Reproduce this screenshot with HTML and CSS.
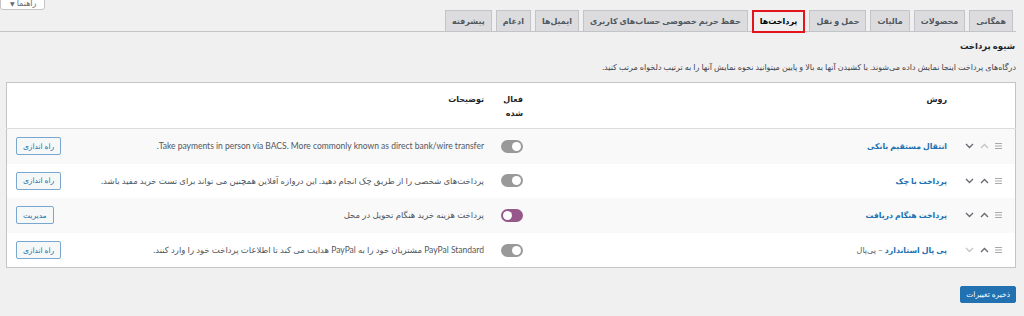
FILE: index.html
```html
<!DOCTYPE html>
<html lang="fa" dir="rtl">
<head>
  <meta charset="UTF-8">
  <meta name="viewport" content="width=device-width, initial-scale=1.0">
  <title>تنظیمات پرداخت</title>
  <link rel="stylesheet" href="styles.css">
</head>
<body>
  <div class="help-bar">
    <button class="help-btn">راهنما <span class="caret">▼</span></button>
  </div>
  <div class="wrap">
    <nav class="nav-tabs">
      <a class="nav-tab" href="#">همگانی</a>
      <a class="nav-tab" href="#">محصولات</a>
      <a class="nav-tab" href="#">مالیات</a>
      <a class="nav-tab" href="#">حمل و نقل</a>
      <a class="nav-tab active" href="#">پرداخت‌ها</a>
      <a class="nav-tab" href="#">حفظ حریم خصوصی حساب‌های کاربری</a>
      <a class="nav-tab" href="#">ایمیل‌ها</a>
      <a class="nav-tab" href="#">ادغام</a>
      <a class="nav-tab" href="#">پیشرفته</a>
    </nav>

    <div class="section">
      <h2>شیوه پرداخت</h2>
      <p class="intro">درگاه‌های پرداخت اینجا نمایش داده می‌شوند. با کشیدن آنها به بالا و پایین میتوانید نحوه نمایش آنها را به ترتیب دلخواه مرتب کنید.</p>

      <table class="gateways">
        <thead>
          <tr>
            <th class="col-sort"></th>
            <th class="col-name">روش</th>
            <th class="col-status">فعال شده</th>
            <th class="col-desc">توضیحات</th>
            <th class="col-action"></th>
          </tr>
        </thead>
        <tbody>
          <tr>
            <td class="col-sort">
              <span class="sort">
                <svg class="handle" width="7" height="6" viewBox="0 0 7 6"><rect y="0" width="7" height="1"/><rect y="2.5" width="7" height="1"/><rect y="5" width="7" height="1"/></svg>
                <svg class="arrow off" width="9" height="6" viewBox="0 0 9 6"><polyline points="1,5 4.5,1.5 8,5"/></svg>
                <svg class="arrow" width="9" height="6" viewBox="0 0 9 6"><polyline points="1,1 4.5,4.5 8,1"/></svg>
              </span>
            </td>
            <td class="col-name"><a href="#">انتقال مستقیم بانکی</a></td>
            <td class="col-status"><span class="toggle"></span></td>
            <td class="col-desc">Take payments in person via BACS. More commonly known as direct bank/wire transfer.</td>
            <td class="col-action"><button class="btn">راه اندازی</button></td>
          </tr>
          <tr>
            <td class="col-sort">
              <span class="sort">
                <svg class="handle" width="7" height="6" viewBox="0 0 7 6"><rect y="0" width="7" height="1"/><rect y="2.5" width="7" height="1"/><rect y="5" width="7" height="1"/></svg>
                <svg class="arrow" width="9" height="6" viewBox="0 0 9 6"><polyline points="1,5 4.5,1.5 8,5"/></svg>
                <svg class="arrow" width="9" height="6" viewBox="0 0 9 6"><polyline points="1,1 4.5,4.5 8,1"/></svg>
              </span>
            </td>
            <td class="col-name"><a href="#">پرداخت با چک</a></td>
            <td class="col-status"><span class="toggle"></span></td>
            <td class="col-desc">پرداخت‌های شخصی را از طریق چک انجام دهید. این دروازه آفلاین همچنین می تواند برای تست خرید مفید باشد.</td>
            <td class="col-action"><button class="btn">راه اندازی</button></td>
          </tr>
          <tr>
            <td class="col-sort">
              <span class="sort">
                <svg class="handle" width="7" height="6" viewBox="0 0 7 6"><rect y="0" width="7" height="1"/><rect y="2.5" width="7" height="1"/><rect y="5" width="7" height="1"/></svg>
                <svg class="arrow" width="9" height="6" viewBox="0 0 9 6"><polyline points="1,5 4.5,1.5 8,5"/></svg>
                <svg class="arrow" width="9" height="6" viewBox="0 0 9 6"><polyline points="1,1 4.5,4.5 8,1"/></svg>
              </span>
            </td>
            <td class="col-name"><a href="#">پرداخت هنگام دریافت</a></td>
            <td class="col-status"><span class="toggle on"></span></td>
            <td class="col-desc">پرداخت هزینه خرید هنگام تحویل در محل</td>
            <td class="col-action"><button class="btn">مدیریت</button></td>
          </tr>
          <tr>
            <td class="col-sort">
              <span class="sort">
                <svg class="handle" width="7" height="6" viewBox="0 0 7 6"><rect y="0" width="7" height="1"/><rect y="2.5" width="7" height="1"/><rect y="5" width="7" height="1"/></svg>
                <svg class="arrow" width="9" height="6" viewBox="0 0 9 6"><polyline points="1,5 4.5,1.5 8,5"/></svg>
                <svg class="arrow off" width="9" height="6" viewBox="0 0 9 6"><polyline points="1,1 4.5,4.5 8,1"/></svg>
              </span>
            </td>
            <td class="col-name"><a href="#">پی پال استاندارد</a> <span class="sub">– پی‌پال</span></td>
            <td class="col-status"><span class="toggle"></span></td>
            <td class="col-desc">PayPal Standard مشتریان خود را به PayPal هدایت می کند تا اطلاعات پرداخت خود را وارد کنند.</td>
            <td class="col-action"><button class="btn">راه اندازی</button></td>
          </tr>
        </tbody>
      </table>

      <div class="submit">
        <button class="btn-primary">ذخیره تغییرات</button>
      </div>
    </div>
  </div>
</body>
</html>
```

FILE: styles.css
```css
/* صفحه تنظیمات پرداخت */
html {
  background: #f0f0f1;
}
body {
  margin: 0;
  font-family: "Lato", "DejaVu Sans", sans-serif;
  font-size: 8px;
  color: #3c434a;
}

/* دکمه راهنما */
.help-bar {
  display: flex;
  justify-content: flex-end;
  height: 10px;
  overflow: hidden;
}
.help-btn {
  margin-top: -5px;
  height: 15px;
  padding: 0 8px 0 9px;
  background: #fff;
  border: 1px solid #c3c4c7;
  border-radius: 0 0 3px 3px;
  font-family: inherit;
  font-size: 8px;
  color: #646970;
}
.help-btn .caret {
  font-size: 6px;
}

.wrap {
  padding-right: 8px;
}

/* زبانه‌ها */
.nav-tabs {
  display: flex;
  gap: 4px;
  padding-right: 3px;
  border-bottom: 1px solid #c3c4c7;
}
.nav-tab {
  display: block;
  height: 21px;
  box-sizing: border-box;
  padding: 0 6px;
  line-height: 20px;
  background: #dcdcde;
  border: 1px solid #c3c4c7;
  border-bottom: none;
  margin-bottom: -1px;
  font-size: 8px;
  font-weight: bold;
  color: #50575e;
  text-decoration: none;
}
.nav-tab.active {
  background: #f0f0f1;
  color: #000;
  border: 2px solid #e2141c;
  height: 23px;
  margin-bottom: -2px;
  line-height: 19px;
}

.section {
  padding-left: 6px;
}
h2 {
  margin: 8px 1px 0 0;
  font-size: 8.5px;
  line-height: 12px;
  color: #1d2327;
}
.intro {
  margin: 9px 0 9px 0;
  font-size: 8px;
  line-height: 12px;
  color: #3c434a;
}

/* جدول درگاه‌ها */
.gateways {
  width: 100%;
  border-collapse: collapse;
  background: #fff;
  border: 1px solid #c3c4c7;
  table-layout: fixed;
}
.gateways th {
  text-align: right;
  vertical-align: top;
  padding: 9px 8px 8px 8px;
  height: 27px;
  font-size: 8px;
  line-height: 14px;
  font-weight: bold;
  color: #1d2327;
  border-bottom: 1px solid #dcdcde;
}
.gateways td {
  height: 34.6px;
  padding: 0 8px;
  vertical-align: middle;
  font-size: 8px;
}
.gateways tbody tr:nth-child(odd) {
  background: #f9f9f9;
}
.gateways .col-sort {
  width: 39px;
  padding-right: 13px;
}
.gateways .col-name {
  width: 409px;
}
.gateways .col-status {
  width: 22px;
  padding: 0 7px 0 9px;
}
.gateways th.col-status {
  padding: 9px 7px 8px 4px;
  width: 27px;
}
.gateways .col-action {
  width: 46px;
  padding: 0 0 0 9px;
  text-align: left;
}
.gateways td.col-desc {
  font-size: 8.5px;
  color: #50575e;
}

.sort {
  display: flex;
  align-items: center;
  gap: 6px;
}
.sort .handle {
  fill: #a7aaad;
}
.sort .arrow polyline {
  fill: none;
  stroke: #646970;
  stroke-width: 1.3;
}
.sort .arrow.off polyline {
  stroke: #c3c4c7;
}

.col-name a {
  color: #2271b1;
  font-weight: bold;
  font-size: 7.8px;
  text-decoration: none;
}
.col-name .sub {
  color: #50575e;
}

.toggle {
  display: block;
  position: relative;
  width: 22px;
  height: 13px;
  border-radius: 7px;
  background: #999;
}
.toggle::after {
  content: "";
  position: absolute;
  top: 2px;
  right: 2px;
  width: 9px;
  height: 9px;
  border-radius: 50%;
  background: #fff;
}
.toggle.on {
  background: #96588a;
}
.toggle.on::after {
  right: auto;
  left: 2px;
}

.btn {
  height: 18px;
  padding: 0 6px;
  background: #f6f7f7;
  border: 1px solid #7aa7d0;
  border-radius: 2px;
  font-family: inherit;
  font-size: 7.5px;
  color: #2271b1;
}

.submit {
  margin-top: 18px;
}
.btn-primary {
  height: 17px;
  padding: 0 5px;
  margin-right: 0;
  background: #2271b1;
  border: 1px solid #2271b1;
  border-radius: 2px;
  font-family: inherit;
  font-size: 7.5px;
  color: #fff;
}
```
